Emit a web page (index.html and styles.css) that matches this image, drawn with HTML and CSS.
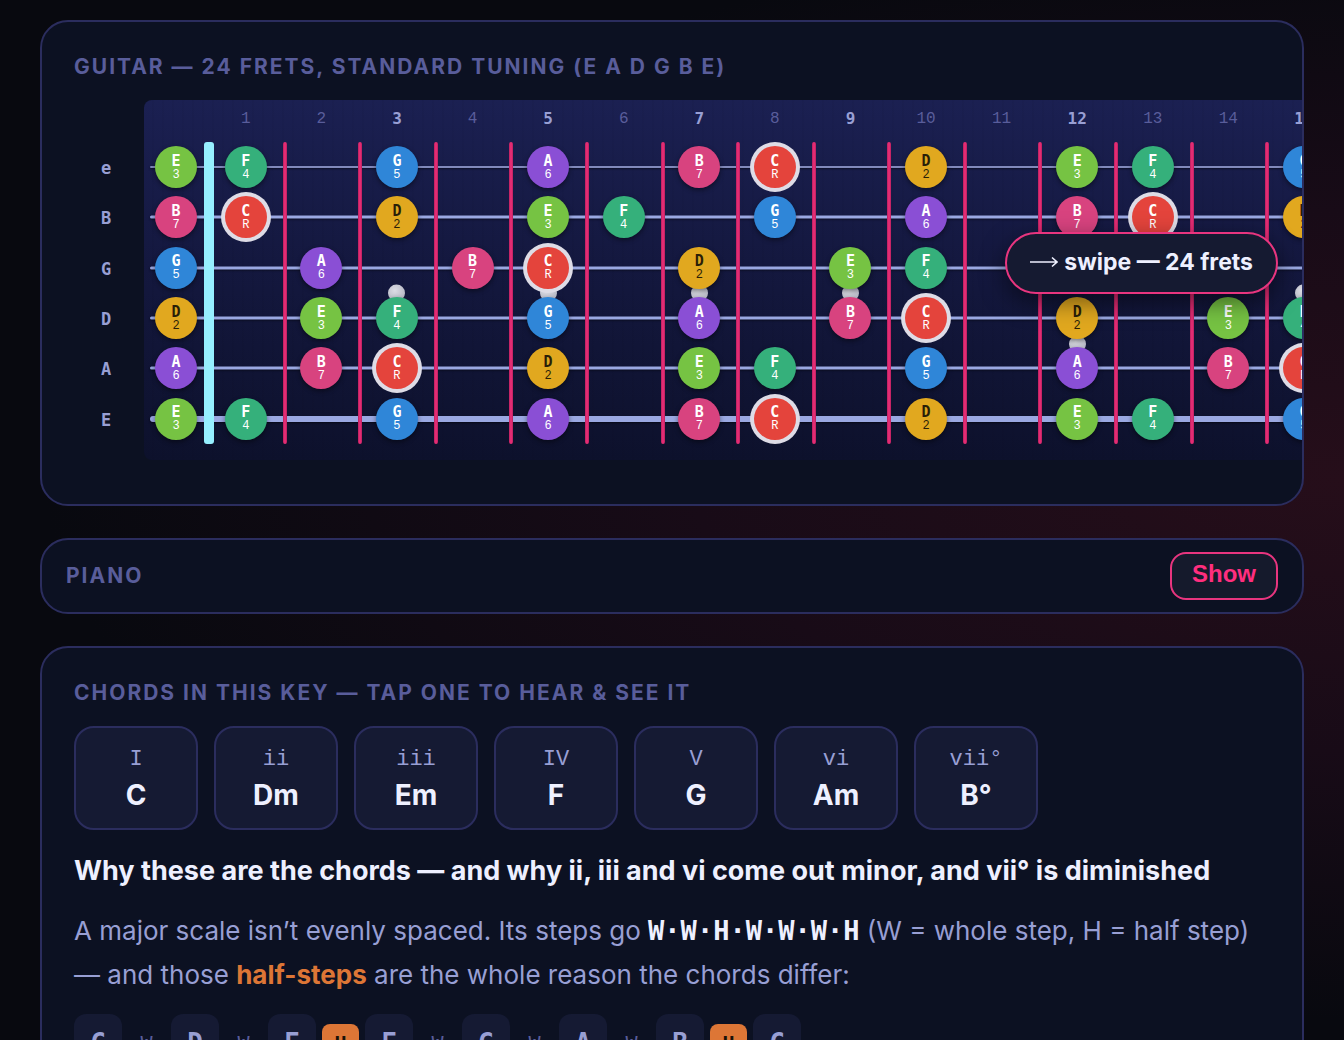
FILE: index.html
```
<!DOCTYPE html>
<html lang="en">
<head>
    <meta charset="UTF-8">
    <meta name="viewport" content="width=device-width, initial-scale=1.0">
    <title>Scale Explorer</title>
    <link rel="stylesheet" href="styles.css">
</head>
<body>
    <main>
        <section class="panel guitar">
            <h2 class="label">Guitar — 24 frets, standard tuning (E A D G B E)</h2>
            <div class="neck-scroll">
                <div class="string-names">
                    <span>e</span>
                    <span>B</span>
                    <span>G</span>
                    <span>D</span>
                    <span>A</span>
                    <span>E</span>
                </div>
                <div class="board">
                    <div class="fret-numbers" id="fret-numbers"></div>
                    <div class="strings" id="strings"></div>
                </div>
            </div>
            <div class="swipe-hint">
                <svg width="28" height="14" viewBox="0 0 28 14" fill="none" stroke="currentColor" stroke-width="1.6" aria-hidden="true">
                    <path d="M0 7H27M22 2.500L27 7L22 11.500"/>
                </svg>
                <span>swipe — 24 frets</span>
            </div>
        </section>

        <section class="panel piano">
            <h2 class="label">Piano</h2>
            <button type="button" class="show-btn">Show</button>
        </section>

        <section class="panel">
            <h2 class="label">Chords in this key — tap one to hear &amp; see it</h2>
            <div class="chords">
                <button type="button" class="chord"><span class="roman">I</span><span class="name">C</span></button>
                <button type="button" class="chord"><span class="roman">ii</span><span class="name">Dm</span></button>
                <button type="button" class="chord"><span class="roman">iii</span><span class="name">Em</span></button>
                <button type="button" class="chord"><span class="roman">IV</span><span class="name">F</span></button>
                <button type="button" class="chord"><span class="roman">V</span><span class="name">G</span></button>
                <button type="button" class="chord"><span class="roman">vi</span><span class="name">Am</span></button>
                <button type="button" class="chord"><span class="roman">vii°</span><span class="name">B°</span></button>
            </div>
            <h3>Why these are the chords — and why ii, iii and vi come out minor, and vii° is diminished</h3>
            <p>A major scale isn’t evenly spaced. Its steps go <b class="steps">W·W·H·W·W·W·H</b> (W = whole step, H = half step) — and those <strong>half-steps</strong> are the whole reason the chords differ:</p>
            <div class="scale">
                <span class="tone">C</span><span class="step">W</span>
                <span class="tone">D</span><span class="step">W</span>
                <span class="tone">E</span><span class="step half">H</span>
                <span class="tone">F</span><span class="step">W</span>
                <span class="tone">G</span><span class="step">W</span>
                <span class="tone">A</span><span class="step">W</span>
                <span class="tone">B</span><span class="step half">H</span>
                <span class="tone">C</span>
            </div>
        </section>
    </main>
    <script src="script.js"></script>
</body>
</html>
```

FILE: styles.css
```
:root {
    --sans: Inter, "Liberation Sans", sans-serif;
    --mono: "Liberation Mono", monospace;
    --mono-bold: "DejaVu Sans Mono", monospace;
    --panel: #0c1122;
    --line: #2b2d5e;
    --text: #eef0ff;
    --muted: #989fd4;
    --dim: #595d9b;
    --pink: #ff2e7e;
    --orange: #dd7636;
}

* {
    box-sizing: border-box;
}

body {
    margin: 0;
    height: 100vh;
    overflow: hidden;
    padding: 20px 40px;
    font-family: var(--sans);
    color: var(--text);
    background: radial-gradient(ellipse 1300px 540px at 100% 480px, #260e1a, #180b17 50%, #08090f), #04070e;
}

main {
    display: flex;
    flex-direction: column;
    gap: 32px;
}

.panel {
    position: relative;
    padding: 32px;
    border: 2px solid var(--line);
    border-radius: 28px;
    background: var(--panel);
}

.label {
    margin: 0;
    font-size: 21px;
    line-height: 26px;
    font-weight: 700;
    letter-spacing: 2px;
    text-transform: uppercase;
    color: var(--dim);
}

/* guitar */
.neck-scroll {
    display: flex;
    gap: 6px;
    margin: 20px -32px 12px 0;
    overflow-x: auto;
    scrollbar-width: none;
}

.string-names {
    flex: none;
    display: grid;
    grid-auto-rows: 1fr;
    width: 64px;
    height: 302px;
    margin-top: 43px;
    place-items: center;
    font: bold 17px var(--mono-bold);
    color: var(--muted);
}

.board {
    flex: none;
    width: 1894px;
    padding-bottom: 16px;
    border-radius: 8px;
    background:
        repeating-linear-gradient(90deg, transparent 0 8px, rgba(0, 0, 0, 0.03) 8px 10px),
        linear-gradient(#1b2052, #14183f 45%, #0d112c);
}

.fret-numbers,
.string {
    display: grid;
    grid-template-columns: 64px minmax(0, 1814px);
}

.frets {
    display: grid;
    grid-template-columns: repeat(24, 1fr);
}

.fret-numbers {
    height: 42px;
    line-height: 38px;
    text-align: center;
    font-family: var(--mono);
    font-size: 16px;
    color: var(--dim);
}

.fret-numbers .marked {
    font-family: var(--mono-bold);
    font-weight: bold;
    color: var(--muted);
}

.strings {
    position: relative;
    display: grid;
    grid-auto-rows: 1fr;
    height: 302px;
}

.string {
    position: relative;
}

/* the wire runs under the frets and notes */
.wire {
    position: absolute;
    left: 6px;
    right: 6px;
    top: 50%;
    height: 3px;
    border-radius: 3px;
    background: #9aa8e2;
    box-shadow: 0 1px 2px rgba(0, 0, 0, 0.5);
    transform: translateY(-50%);
}

.string:first-child .wire {
    height: 2px;
    background: #8189bb;
}

.string:last-child .wire {
    height: 6px;
}

.cell {
    position: relative;
    display: grid;
    place-items: center;
}

.nut,
.fret-wire {
    position: absolute;
    top: 0;
    bottom: 0;
    right: -3px;
    width: 4px;
    border-radius: 2px;
    background: linear-gradient(90deg, #b8205f, #f0307a, #b8205f);
}

.nut {
    right: -6px;
    width: 10px;
    border-radius: 3px;
    background: #96efff;
}

.fret-layer {
    position: absolute;
    inset: 0;
    display: grid;
    grid-template-columns: 64px minmax(0, 1814px);
}

.inlay {
    position: absolute;
    top: 50%;
    width: 17px;
    height: 17px;
    border-radius: 50%;
    background: radial-gradient(circle at 40% 35%, #dcdde4, #a9abba);
    transform: translateY(-50%);
}

.inlay.upper {
    top: 33%;
}

.inlay.lower {
    top: 67%;
}

.note {
    position: relative;
    display: flex;
    flex-direction: column;
    align-items: center;
    justify-content: center;
    width: 42px;
    height: 42px;
    padding: 0;
    border: 0;
    border-radius: 50%;
    color: #fff;
    font-family: var(--mono);
    font-size: 12px;
    line-height: 12px;
    box-shadow: 0 2px 5px rgba(0, 0, 0, 0.45);
}

.note b {
    font-family: var(--mono-bold);
    font-size: 15px;
    line-height: 15px;
}

.note-C {
    background: #e4443c;
    box-shadow: 0 0 0 4px #dedce6;
}

.note-D {
    background: #e1a81f;
    color: #2a1f08;
}

.note-E { background: #76c343; }
.note-F { background: #35b07b; }
.note-G { background: #2f86d8; }
.note-A { background: #8a4fd5; }
.note-B { background: #d8437f; }

.swipe-hint {
    position: absolute;
    top: 50%;
    right: 24px;
    display: flex;
    align-items: center;
    gap: 6px;
    height: 62px;
    padding: 0 23px 2px;
    border: 2px solid #e8357f;
    border-radius: 31px;
    background: #151a31;
    font-size: 23px;
    font-weight: 700;
    box-shadow: 0 8px 24px rgba(0, 0, 0, 0.5);
    transform: translateY(-50%);
}

/* piano */
.piano {
    display: flex;
    align-items: center;
    justify-content: space-between;
    padding: 12px 24px;
}

.show-btn {
    height: 48px;
    padding: 0 20px 4px;
    border: 2px solid #e8357f;
    border-radius: 16px;
    background: #151a2c;
    color: var(--pink);
    font: bold 24px "Liberation Sans", sans-serif;
    cursor: pointer;
}

/* chords */
.chords {
    display: flex;
    flex-wrap: wrap;
    gap: 16px;
    margin-top: 20px;
}

.chord {
    display: flex;
    flex-direction: column;
    align-items: center;
    justify-content: center;
    width: 124px;
    height: 104px;
    padding: 6px 0 0;
    border: 2px solid var(--line);
    border-radius: 20px;
    background: #151a33;
    color: var(--text);
    cursor: pointer;
}

.roman {
    font: 22px/28px var(--mono);
    color: var(--muted);
}

.name {
    font: bold 28px/42px var(--sans);
}

h3 {
    margin: 24px 0 0;
    font-size: 27px;
    line-height: 34px;
}

p {
    margin: 21px 0 17px;
    font-size: 26px;
    line-height: 44px;
    color: var(--muted);
}

.steps {
    font-family: var(--mono-bold);
    font-size: 27px;
    line-height: 1;
    color: var(--text);
}

p strong {
    color: var(--orange);
}

.scale {
    display: flex;
    align-items: center;
    gap: 6px;
    font-family: var(--mono-bold);
}

.tone {
    width: 48px;
    border-radius: 12px;
    background: #151a33;
    color: var(--muted);
    font-size: 26px;
    font-weight: bold;
    line-height: 58px;
    text-align: center;
}

.step {
    width: 37px;
    border-radius: 8px;
    color: var(--dim);
    font-size: 20px;
    line-height: 38px;
    text-align: center;
}

.half {
    background: var(--orange);
    color: #1a1208;
    font-weight: bold;
}
```

FILE: script.js
```
const FRETS = 24;
const MARKED = [3, 5, 7, 9, 12, 15, 17, 19, 21, 24];
// semitones above C for the open strings, thin to thick
const OPEN = [4, 11, 7, 2, 9, 4];
const SCALE = {
    0: ['C', 'R'],
    2: ['D', '2'],
    4: ['E', '3'],
    5: ['F', '4'],
    7: ['G', '5'],
    9: ['A', '6'],
    11: ['B', '7']
};

function cell(semitone) {
    const note = SCALE[semitone % 12];
    if (!note) return '<div class="cell"></div>';
    return `<div class="cell"><button type="button" class="note note-${note[0]}"><b>${note[0]}</b>${note[1]}</button></div>`;
}

function inlays(fret) {
    if (!MARKED.includes(fret)) return '';
    if (fret % 12 === 0) return '<i class="inlay upper"></i><i class="inlay lower"></i>';
    return '<i class="inlay"></i>';
}

function drawBoard() {
    let numbers = '';
    let wires = '';
    for (let f = 1; f <= FRETS; f++) {
        numbers += `<span class="${MARKED.includes(f) ? 'marked' : ''}">${f}</span>`;
        wires += `<div class="cell">${inlays(f)}<div class="fret-wire"></div></div>`;
    }
    document.getElementById('fret-numbers').innerHTML = `<span></span><div class="frets">${numbers}</div>`;

    let rows = '';
    let lines = '';
    OPEN.forEach(open => {
        let frets = '';
        for (let f = 1; f <= FRETS; f++) frets += cell(open + f);
        lines += '<div class="string"><div class="wire"></div></div>';
        rows += `<div class="string">${cell(open)}<div class="frets">${frets}</div></div>`;
    });

    document.getElementById('strings').outerHTML =
        `<div class="strings">
            <div class="strings" style="grid-area: 1 / 1">${lines}</div>
            <div class="fret-layer"><div class="cell"><div class="nut"></div></div><div class="frets">${wires}</div></div>
            <div class="strings" style="grid-area: 1 / 1">${rows}</div>
        </div>`;
}

drawBoard();
```
